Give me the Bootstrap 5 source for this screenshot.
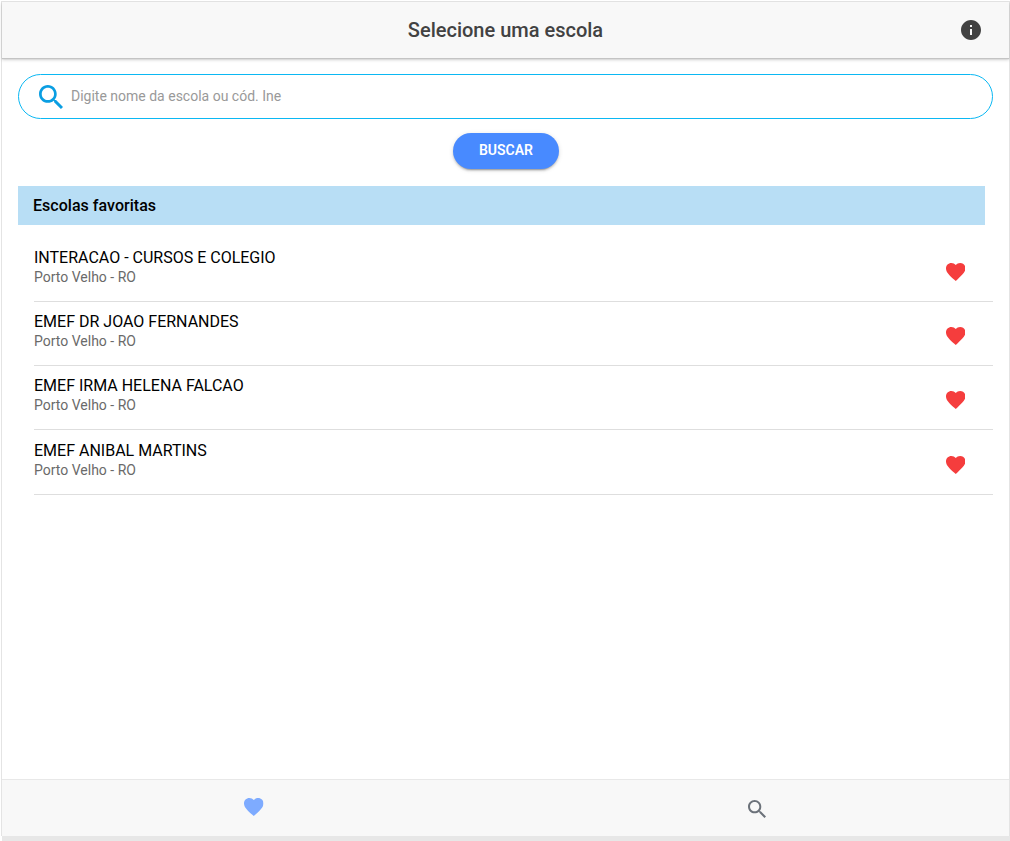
<!DOCTYPE html>
<html lang="pt-BR">
<head>
<meta charset="utf-8">
<meta name="viewport" content="width=device-width, initial-scale=1">
<title>Selecione uma escola</title>
<link href="https://cdn.jsdelivr.net/npm/bootstrap@5.3.0/dist/css/bootstrap.min.css" rel="stylesheet">
<style>
body { font-family: Roboto, "Liberation Sans", sans-serif; background: #fff; color: #000; overflow: hidden; }
.app { height: 841px; padding: 1px 0 0 1px; }
.app-frame { border: 1px solid #e4e4e4; border-bottom: 0; min-height: 0; }
.app-header { height: 56px; background: #f8f8f8; box-shadow: 0 1px 1px #c4c4c4, 0 2px 3px rgba(0,0,0,.18); padding: 0 28px; }
.app-title { font-size: 20px; font-weight: 500; line-height: 24px; color: #424242; }
.app-content { padding: 16px 16px 0; }
.search-box { height: 45px; border: 1px solid #0bb8f3; border-radius: 23px; padding: 0 20px; }
.search-box input { font-size: 14px; line-height: 20px; margin: 0 0 2px 8px; color: #333; }
.search-box input::placeholder { color: #999; opacity: 1; }
.btn-buscar { width: 106px; height: 36px; margin-top: 14px; background: #488aff; color: #fff; font-size: 14px; font-weight: 600; line-height: 34px; padding: 0 0 2px 1px; border: 0; box-shadow: 0 2px 2px 0 rgba(0,0,0,.14), 0 3px 1px -2px rgba(0,0,0,.2), 0 1px 5px 0 rgba(0,0,0,.12); }
.section-title { height: 39px; margin: 17px 8px 0 0; padding-left: 15px; background: #b8def5; font-size: 16px; font-weight: 500; line-height: 39px; letter-spacing: .03px; }
.school-list { margin: 13px 0 0 16px; }
.school-list .list-group-item { height: 64px; padding: 10px 28px 0 0; border-color: #dedede; border-width: 0 0 1px; color: #000; background: none; }
.school-list .list-group-item:last-child { height: 65px; padding-top: 11px; border-bottom-width: 1px; }
.school-name { font-size: 16px; line-height: 19px; }
.school-city { font-size: 14px; line-height: 20px; color: #6a6a6a; }
.fav { margin-top: 14.5px; }
.tab-bar { height: 57px; background: #f8f8f8; border-top: 1px solid #e8e8e8; }
.tab-heart { margin-top: 1.5px; }
.bottom-strip { height: 5px; margin-left: 1px; background: #e7e7e7; }
svg { display: block; }
</style>
</head>
<body>
<svg width="0" height="0" class="position-absolute" aria-hidden="true">
  <symbol id="heart" viewBox="48 64 416 384" preserveAspectRatio="none"><path d="M256 448l-30.164-27.211C118.718 322.442 48 258.61 48 179.095 48 114.221 97.918 64 162.4 64c36.399 0 70.717 16.742 93.6 43.947C278.882 80.742 313.199 64 349.6 64 414.082 64 464 114.221 464 179.095c0 79.516-70.719 143.348-177.836 241.694L256 448z"/></symbol>
  <symbol id="search" viewBox="64 64 384 384"><path d="M337.509 305.372h-17.501l-6.571-5.486c20.791-25.232 33.922-57.054 33.922-93.257C347.358 127.632 283.896 64 205.135 64 127.452 64 64 127.632 64 206.629s63.452 142.628 142.225 142.628c35.011 0 67.831-13.167 92.991-34.008l6.561 5.487v17.551L415.18 448 448 415.086 337.509 305.372zm-131.284 0c-54.702 0-98.463-43.887-98.463-98.743 0-54.858 43.761-98.742 98.463-98.742 54.7 0 98.462 43.884 98.462 98.742 0 54.856-43.762 98.743-98.462 98.743z"/></symbol>
</svg>
<div class="app d-flex flex-column">
  <div class="app-frame d-flex flex-column flex-grow-1">
    <header class="app-header d-flex align-items-center">
      <div class="col"></div>
      <h1 class="app-title m-0">Selecione uma escola</h1>
      <div class="col d-flex justify-content-end">
        <svg width="20" height="20" viewBox="2 2 20 20" fill="#424242"><path d="M12 2C6.48 2 2 6.48 2 12s4.48 10 10 10 10-4.48 10-10S17.52 2 12 2zm1 15h-2v-6h2v6zm0-8h-2V7h2v2z"/></svg>
      </div>
    </header>
    <main class="app-content flex-grow-1">
      <div class="search-box d-flex align-items-center">
        <svg width="24" height="24" fill="#0a9ee2"><use href="#search"/></svg>
        <input class="flex-grow-1 border-0 bg-transparent p-0" type="text" placeholder="Digite nome da escola ou cód. Ine">
      </div>
      <div class="d-flex justify-content-center"><button class="btn btn-buscar rounded-pill" type="button">BUSCAR</button></div>
      <h2 class="section-title mb-0">Escolas favoritas</h2>
      <ul class="school-list list-group list-group-flush">
        <li class="list-group-item d-flex justify-content-between"><div><div class="school-name">INTERACAO - CURSOS E COLEGIO</div><div class="school-city">Porto Velho - RO</div></div><svg class="fav" width="19.5" height="18" fill="#f53d3d"><use href="#heart"/></svg></li>
        <li class="list-group-item d-flex justify-content-between"><div><div class="school-name">EMEF DR JOAO FERNANDES</div><div class="school-city">Porto Velho - RO</div></div><svg class="fav" width="19.5" height="18" fill="#f53d3d"><use href="#heart"/></svg></li>
        <li class="list-group-item d-flex justify-content-between"><div><div class="school-name">EMEF IRMA HELENA FALCAO</div><div class="school-city">Porto Velho - RO</div></div><svg class="fav" width="19.5" height="18" fill="#f53d3d"><use href="#heart"/></svg></li>
        <li class="list-group-item d-flex justify-content-between"><div><div class="school-name">EMEF ANIBAL MARTINS</div><div class="school-city">Porto Velho - RO</div></div><svg class="fav" width="19.5" height="18" fill="#f53d3d"><use href="#heart"/></svg></li>
      </ul>
    </main>
    <nav class="tab-bar d-flex">
      <div class="w-50 d-flex justify-content-center pt-3"><svg class="tab-heart" width="19.5" height="18" fill="#7eabff"><use href="#heart"/></svg></div>
      <div class="w-50 d-flex justify-content-center pt-3"><svg class="mt-1" width="18" height="18" fill="#6c727a"><use href="#search"/></svg></div>
    </nav>
  </div>
  <div class="bottom-strip"></div>
</div>
<script src="https://cdn.jsdelivr.net/npm/bootstrap@5.3.0/dist/js/bootstrap.bundle.min.js"></script>
</body>
</html>
